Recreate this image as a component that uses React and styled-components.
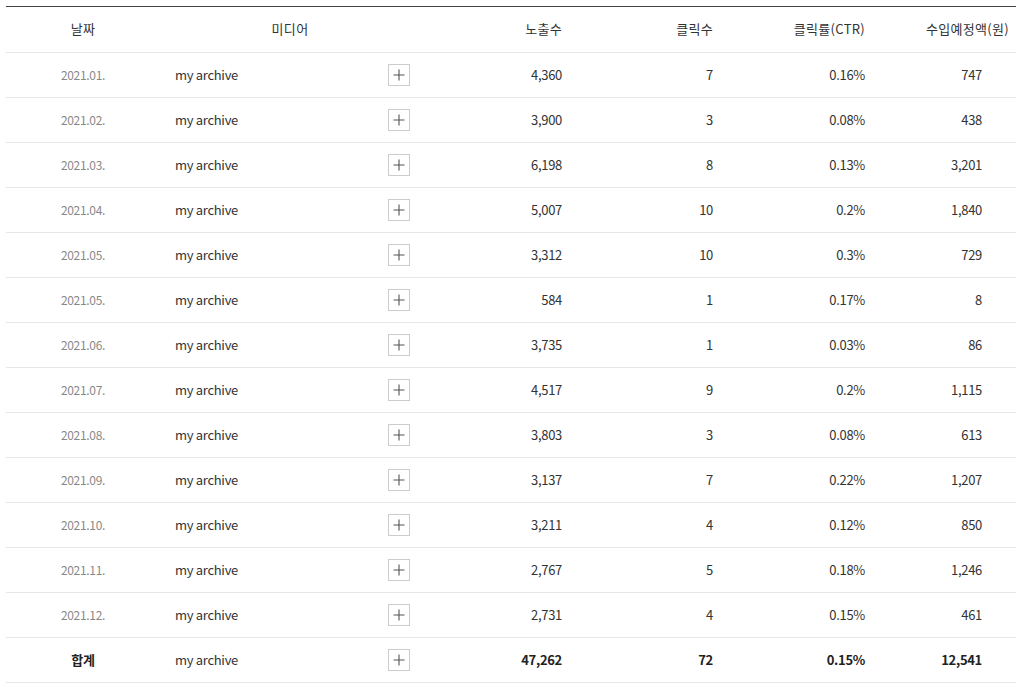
import React from 'react';
import styled, { createGlobalStyle } from 'styled-components';

const GlobalStyle = createGlobalStyle`
    body {
        margin: 0;
        background: #fff;
        font-family: "Noto Sans CJK KR", "Noto Sans", sans-serif;
    }
`;

const rows = [
    ['2021.01.', '4,360', '7', '0.16%', '747'],
    ['2021.02.', '3,900', '3', '0.08%', '438'],
    ['2021.03.', '6,198', '8', '0.13%', '3,201'],
    ['2021.04.', '5,007', '10', '0.2%', '1,840'],
    ['2021.05.', '3,312', '10', '0.3%', '729'],
    ['2021.05.', '584', '1', '0.17%', '8'],
    ['2021.06.', '3,735', '1', '0.03%', '86'],
    ['2021.07.', '4,517', '9', '0.2%', '1,115'],
    ['2021.08.', '3,803', '3', '0.08%', '613'],
    ['2021.09.', '3,137', '7', '0.22%', '1,207'],
    ['2021.10.', '3,211', '4', '0.12%', '850'],
    ['2021.11.', '2,767', '5', '0.18%', '1,246'],
    ['2021.12.', '2,731', '4', '0.15%', '461'],
];

const PlusButton = () => (
    <AddBtn type="button" aria-label="추가">
        <svg width="12" height="12" viewBox="0 0 12 12">
            <path d="M6 0.5V11.5M0.5 6H11.5" stroke="#555" strokeWidth="1.1" />
        </svg>
    </AddBtn>
);

const App = () => {
    return (
        <Page>
            <GlobalStyle />
            <Table>
                <colgroup>
                    <col style={{ width: 154 }} />
                    <col style={{ width: 260 }} />
                    <col style={{ width: 160 }} />
                    <col style={{ width: 151 }} />
                    <col style={{ width: 152 }} />
                    <col />
                </colgroup>
                <thead>
                    <tr>
                        <Th>날짜</Th>
                        <Th>미디어</Th>
                        <Th $right $pr={18}>노출수</Th>
                        <Th $right $pr={18}>클릭수</Th>
                        <Th $right $pr={18}>클릭률(CTR)</Th>
                        <Th $right $pr={7}>수입예정액(원)</Th>
                    </tr>
                </thead>
                <tbody>
                    {rows.map((r, i) => (
                        <tr key={i}>
                            <DateCell>{r[0]}</DateCell>
                            <Td>
                                <Media>
                                    <span>my archive</span>
                                    <PlusButton />
                                </Media>
                            </Td>
                            <Num $pr={18}>{r[1]}</Num>
                            <Num $pr={18}>{r[2]}</Num>
                            <Num $pr={18}>{r[3]}</Num>
                            <Num $pr={34}>{r[4]}</Num>
                        </tr>
                    ))}
                    <tr>
                        <DateCell $total>합계</DateCell>
                        <Td>
                            <Media>
                                <span>my archive</span>
                                <PlusButton />
                            </Media>
                        </Td>
                        <Num $pr={18} $bold>47,262</Num>
                        <Num $pr={18} $bold>72</Num>
                        <Num $pr={18} $bold>0.15%</Num>
                        <Num $pr={34} $bold>12,541</Num>
                    </tr>
                </tbody>
            </Table>
        </Page>
    );
};

const Page = styled.div`
    padding: 6px 8px 0 6px;
`;

const Table = styled.table`
    width: 100%;
    table-layout: fixed;
    border-collapse: collapse;
    border-top: 1px solid #444;
    font-size: 13px;
    color: #333;
    letter-spacing: -0.3px;
`;

const Th = styled.th`
    height: 43px;
    padding: 0 ${p => p.$pr || 0}px 2px 0;
    font-weight: 400;
    color: #333;
    letter-spacing: 0.3px;
    text-align: ${p => (p.$right ? 'right' : 'center')};
    border-bottom: 1px solid #e6e6e6;
`;

const Td = styled.td`
    height: 42px;
    padding: 0 0 2px 0;
    border-bottom: 1px solid #e6e6e6;
`;

const DateCell = styled(Td)`
    text-align: center;
    font-size: ${p => (p.$total ? '13px' : '12px')};
    color: ${p => (p.$total ? '#222' : '#888')};
    font-weight: ${p => (p.$total ? 700 : 400)};
`;

const Num = styled(Td)`
    text-align: right;
    padding-right: ${p => p.$pr}px;
    font-weight: ${p => (p.$bold ? 700 : 400)};
    color: ${p => (p.$bold ? '#222' : '#333')};
`;

const Media = styled.div`
    display: flex;
    align-items: center;
    justify-content: space-between;
    padding: 0 10px 0 15px;
    color: #333;
`;

const AddBtn = styled.button`
    display: flex;
    align-items: center;
    justify-content: center;
    width: 22px;
    height: 22px;
    margin-top: 2px;
    padding: 0;
    border: 1px solid #ccc;
    background: #fff;
    cursor: pointer;
`;

export default App;
